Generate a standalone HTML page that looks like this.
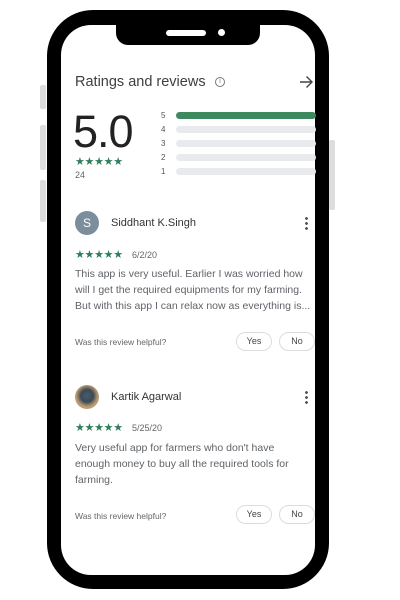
<!DOCTYPE html>
<html><head><meta charset="utf-8"><style>
*{margin:0;padding:0;box-sizing:border-box}
body{width:400px;height:600px;background:#fff;position:relative;overflow:hidden;font-family:"Liberation Sans",sans-serif;color:#3c4043}
.a{position:absolute}
.btn{position:absolute;width:36px;height:19px;border:1px solid #dadce0;border-radius:10px;font-size:9px;text-align:center;line-height:17px;color:#444}
.star{color:#2e7d5b;font-size:11px;letter-spacing:-0.3px}
.txt{font-size:10.5px;line-height:16px;color:#5f6368;white-space:nowrap}
.bar{position:absolute;left:176px;width:140px;height:7px;border-radius:4px;background:#e8eaed}
.n{position:absolute;left:161px;font-size:8px;color:#555}
</style></head><body>
<div class="a" style="left:40px;top:85px;width:6px;height:24px;background:#ddd;border-radius:2px"></div>
<div class="a" style="left:40px;top:125px;width:6px;height:45px;background:#ddd;border-radius:2px"></div>
<div class="a" style="left:40px;top:180px;width:6px;height:42px;background:#ddd;border-radius:2px"></div>
<div class="a" style="left:329px;top:140px;width:6px;height:70px;background:#ddd;border-radius:2px"></div>
<div class="a" style="left:47px;top:10px;width:282px;height:579px;background:#000;border-radius:46px"></div>
<div class="a" style="left:61px;top:25px;width:254px;height:550px;background:#fff;border-radius:30px;overflow:hidden">
</div>
<div class="a" style="left:116px;top:20px;width:144px;height:25px;background:#000;border-radius:0 0 12px 12px"></div>
<div class="a" style="left:166px;top:30px;width:40px;height:6px;background:#fff;border-radius:3px"></div>
<div class="a" style="left:218px;top:29px;width:7px;height:7px;background:#fff;border-radius:50%"></div>

<div class="a" style="left:75px;top:74px;font-size:14.5px;color:#3c4043">Ratings and reviews</div>
<div class="a" style="left:215px;top:77px;width:10px;height:10px;border:1px solid #777;border-radius:50%;font-size:7px;text-align:center;line-height:8px;color:#777">i</div>
<svg class="a" style="left:298px;top:74px" width="16" height="16" viewBox="0 0 16 16"><path d="M2 8H14M8.5 2.5L14 8L8.5 13.5" fill="none" stroke="#444" stroke-width="1.4"/></svg>
<div class="a" style="left:73px;top:106px;font-size:45px;color:#222;letter-spacing:-1px">5.0</div>
<div class="a star" style="left:75px;top:155px">★★★★★</div>
<div class="a" style="left:75px;top:170px;font-size:9px;color:#666">24</div>
<div class="n" style="top:111px">5</div><div class="n" style="top:125px">4</div><div class="n" style="top:139px">3</div><div class="n" style="top:153px">2</div><div class="n" style="top:167px">1</div>
<div class="bar" style="top:112px;background:#3d8a5f"></div>
<div class="bar" style="top:126px"></div><div class="bar" style="top:140px"></div><div class="bar" style="top:154px"></div><div class="bar" style="top:168px"></div>

<div class="a" style="left:75px;top:211px;width:24px;height:24px;border-radius:50%;background:#7c8e9b;color:#fff;font-size:12px;text-align:center;line-height:24px">S</div>
<div class="a" style="left:111px;top:217px;font-size:11px;color:#333">Siddhant K.Singh</div>
<div class="a" style="left:305px;top:216px;width:3px;height:14px;background:radial-gradient(circle,#555 1.3px,transparent 1.5px) 0 0/3px 5px repeat-y"></div>
<div class="a star" style="left:75px;top:248px">★★★★★</div>
<div class="a" style="left:132px;top:250px;font-size:9px;color:#666">6/2/20</div>
<div class="a txt" style="left:75px;top:266px">This app is very useful. Earlier I was worried how<br>will I get the required equipments for my farming.<br>But with this app I can relax now as everything is...</div>
<div class="a" style="left:75px;top:337px;font-size:8.5px;color:#666">Was this review helpful?</div>
<div class="btn" style="left:236px;top:332px">Yes</div><div class="btn" style="left:279px;top:332px">No</div>

<div class="a" style="left:75px;top:385px;width:24px;height:24px;border-radius:50%;background:radial-gradient(circle at 50% 45%,#4a5d6e 0,#3b4a55 35%,#b79870 60%,#d4b38a 100%)"></div>
<div class="a" style="left:111px;top:391px;font-size:11px;color:#333">Kartik Agarwal</div>
<div class="a" style="left:305px;top:390px;width:3px;height:14px;background:radial-gradient(circle,#555 1.3px,transparent 1.5px) 0 0/3px 5px repeat-y"></div>
<div class="a star" style="left:75px;top:421px">★★★★★</div>
<div class="a" style="left:132px;top:423px;font-size:9px;color:#666">5/25/20</div>
<div class="a txt" style="left:75px;top:440px">Very useful app for farmers who don't have<br>enough money to buy all the required tools for<br>farming.</div>
<div class="a" style="left:75px;top:511px;font-size:8.5px;color:#666">Was this review helpful?</div>
<div class="btn" style="left:236px;top:505px">Yes</div><div class="btn" style="left:279px;top:505px">No</div>
</body></html>
